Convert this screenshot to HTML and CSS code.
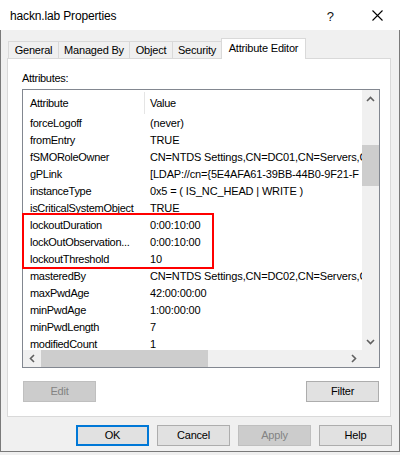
FILE: index.html
```html
<!DOCTYPE html>
<html>
<head>
<meta charset="utf-8">
<link rel="stylesheet" href="styles.css">
</head>
<body>
<div class="window">
  <div class="titlebar">
    <span class="title">hackn.lab Properties</span>
    <span class="help">?</span>
    <svg class="close" width="11" height="11" viewBox="0 0 11 11"><path d="M0.5 0.5 L10.5 10.5 M10.5 0.5 L0.5 10.5" stroke="#000" stroke-width="1.1" fill="none"/></svg>
  </div>
  <div class="main">
    <div class="tabs">
      <div class="tab t-general">General</div>
      <div class="tab t-managed">Managed By</div>
      <div class="tab t-object">Object</div>
      <div class="tab t-security">Security</div>
      <div class="tab t-attr active">Attribute Editor</div>
    </div>
    <div class="panel">
      <div class="label">Attributes:</div>
      <div class="listbox">
        <div class="list-top">
          <div class="listview">
            <div class="lv-head">
              <div class="h1">Attribute</div>
              <div class="h2">Value</div>
            </div>
            <div class="row"><div class="c1">forceLogoff</div><div class="c2">(never)</div></div>
            <div class="row"><div class="c1">fromEntry</div><div class="c2">TRUE</div></div>
            <div class="row"><div class="c1">fSMORoleOwner</div><div class="c2">CN=NTDS Settings,CN=DC01,CN=Servers,C</div></div>
            <div class="row"><div class="c1">gPLink</div><div class="c2">[LDAP://cn={5E4AFA61-39BB-44B0-9F21-F</div></div>
            <div class="row"><div class="c1">instanceType</div><div class="c2">0x5 = ( IS_NC_HEAD | WRITE )</div></div>
            <div class="row"><div class="c1">isCriticalSystemObject</div><div class="c2">TRUE</div></div>
            <div class="row"><div class="c1">lockoutDuration</div><div class="c2">0:00:10:00</div></div>
            <div class="row"><div class="c1">lockOutObservation...</div><div class="c2">0:00:10:00</div></div>
            <div class="row"><div class="c1">lockoutThreshold</div><div class="c2">10</div></div>
            <div class="row"><div class="c1">masteredBy</div><div class="c2">CN=NTDS Settings,CN=DC02,CN=Servers,C</div></div>
            <div class="row"><div class="c1">maxPwdAge</div><div class="c2">42:00:00:00</div></div>
            <div class="row"><div class="c1">minPwdAge</div><div class="c2">1:00:00:00</div></div>
            <div class="row"><div class="c1">minPwdLength</div><div class="c2">7</div></div>
            <div class="row"><div class="c1">modifiedCount</div><div class="c2">1</div></div>
          </div>
          <div class="vscroll">
            <div class="sbtn"><svg width="9" height="6" viewBox="0 0 9 6"><polyline points="1,5 4.5,1.5 8,5" stroke="#606060" stroke-width="1.6" fill="none"/></svg></div>
            <div class="vtrack"><div class="vthumb"></div></div>
            <div class="sbtn"><svg width="9" height="6" viewBox="0 0 9 6"><polyline points="1,1 4.5,4.5 8,1" stroke="#606060" stroke-width="1.6" fill="none"/></svg></div>
          </div>
        </div>
        <div class="hbar">
          <div class="hscroll">
            <div class="sbtn"><svg width="6" height="9" viewBox="0 0 6 9"><polyline points="5,1 1.5,4.5 5,8" stroke="#606060" stroke-width="1.6" fill="none"/></svg></div>
            <div class="htrack"><div class="hthumb"></div></div>
            <div class="sbtn"><svg width="6" height="9" viewBox="0 0 6 9"><polyline points="1,1 4.5,4.5 1,8" stroke="#606060" stroke-width="1.6" fill="none"/></svg></div>
          </div>
          <div class="corner"></div>
        </div>
        <div class="highlight"></div>
      </div>
      <div class="pbtns">
        <div class="btn disabled">Edit</div>
        <div class="btn">Filter</div>
      </div>
    </div>
    <div class="dbtns">
      <div class="btn default">OK</div>
      <div class="btn">Cancel</div>
      <div class="btn disabled">Apply</div>
      <div class="btn">Help</div>
    </div>
  </div>
</div>
</body>
</html>
```

FILE: styles.css
```css
* { box-sizing: border-box; }
html, body { margin: 0; padding: 0; }
body {
  width: 400px;
  height: 455px;
  background: #f0f0f0;
  font-family: "Liberation Sans", Arial, sans-serif;
  font-size: 11px;
  color: #000;
  overflow: hidden;
}
.window {
  width: 400px;
  height: 452px;
  display: flex;
  flex-direction: column;
  background: #f0f0f0;
}
.titlebar {
  height: 30px;
  flex: none;
  background: #fff;
  display: flex;
  align-items: center;
  padding-left: 10px;
  padding-top: 2px;
}
.title {
  flex: 1;
  font-size: 12px;
  letter-spacing: -0.15px;
}
.help {
  font-size: 13px;
  margin-right: 38px;
  color: #111;
}
.close {
  margin-right: 17px;
  margin-top: -1px;
}
.main {
  flex: 1;
  border: 1px solid #7a7a7a;
  border-top: none;
  padding: 8px 8px 0 6px;
  display: flex;
  flex-direction: column;
}
.tabs {
  display: flex;
  align-items: flex-end;
  height: 20px;
  padding-left: 1px;
}
.tab {
  height: 17px;
  border: 1px solid #d9d9d9;
  border-bottom: none;
  margin-left: -1px;
  text-align: center;
  line-height: 16px;
  background: #f0f0f0;
  letter-spacing: -0.2px;
  white-space: nowrap;
}
.t-general { width: 51px; margin-left: 0; }
.t-managed { width: 72px; }
.t-object { width: 44px; }
.t-security { width: 50px; }
.t-attr { width: 85px; }
.tab.active {
  height: 21px;
  background: #fff;
  margin-bottom: -1px;
  line-height: 18px;
  position: relative;
  z-index: 1;
}
.panel {
  height: 359px;
  background: #fff;
  border: 1px solid #d9d9d9;
  padding: 13px 0 0 14px;
}
.label {
  height: 13px;
  line-height: 13px;
  letter-spacing: -0.3px;
}
.listbox {
  margin-top: 4px;
  width: 358px;
  height: 279px;
  border: 1px solid #828790;
  position: relative;
  display: flex;
  flex-direction: column;
}
.list-top {
  display: flex;
  height: 260px;
}
.listview {
  flex: 1;
  overflow: hidden;
  letter-spacing: -0.3px;
}
.lv-head {
  display: flex;
  align-items: flex-end;
  height: 24px;
}
.h1, .h2 {
  height: 22px;
  line-height: 23px;
}
.h1 {
  width: 122px;
  padding-left: 7px;
  border-right: 1px solid #e5e5e5;
}
.h2 { padding-left: 5px; }
.row {
  display: flex;
  height: 17px;
  line-height: 18px;
  white-space: nowrap;
}
.c1 {
  width: 122px;
  flex: none;
  padding-left: 7px;
  overflow: hidden;
}
.c2 {
  padding-left: 5px;
  letter-spacing: -0.15px;
}
.vscroll {
  width: 17px;
  flex: none;
  background: #f0f0f0;
  display: flex;
  flex-direction: column;
}
.sbtn {
  width: 17px;
  height: 17px;
  flex: none;
  display: flex;
  align-items: center;
  justify-content: center;
}
.vtrack { flex: 1; }
.vthumb {
  margin-top: 38px;
  height: 41px;
  background: #cdcdcd;
}
.hbar {
  display: flex;
  height: 17px;
}
.hscroll {
  flex: 1;
  display: flex;
  background: #f0f0f0;
}
.htrack { flex: 1; }
.hthumb {
  margin-left: 1px;
  width: 167px;
  height: 17px;
  background: #cdcdcd;
}
.corner {
  width: 17px;
  background: #f0f0f0;
}
.highlight {
  position: absolute;
  left: -1px;
  top: 123px;
  width: 192px;
  height: 56px;
  border: 2px solid #ff0000;
}
.pbtns {
  width: 358px;
  margin-top: 13px;
  padding: 0 1px;
  display: flex;
  justify-content: space-between;
}
.btn {
  width: 73px;
  height: 21px;
  border: 1px solid #adadad;
  background: #e1e1e1;
  text-align: center;
  line-height: 19px;
  letter-spacing: -0.2px;
}
.btn.disabled {
  background: #cccccc;
  border-color: #bfbfbf;
  color: #838383;
}
.btn.default {
  border: 2px solid #0078d7;
  line-height: 17px;
}
.dbtns {
  display: flex;
  justify-content: flex-end;
  gap: 8px;
  margin-top: 8px;
  margin-right: -1px;
}
```
